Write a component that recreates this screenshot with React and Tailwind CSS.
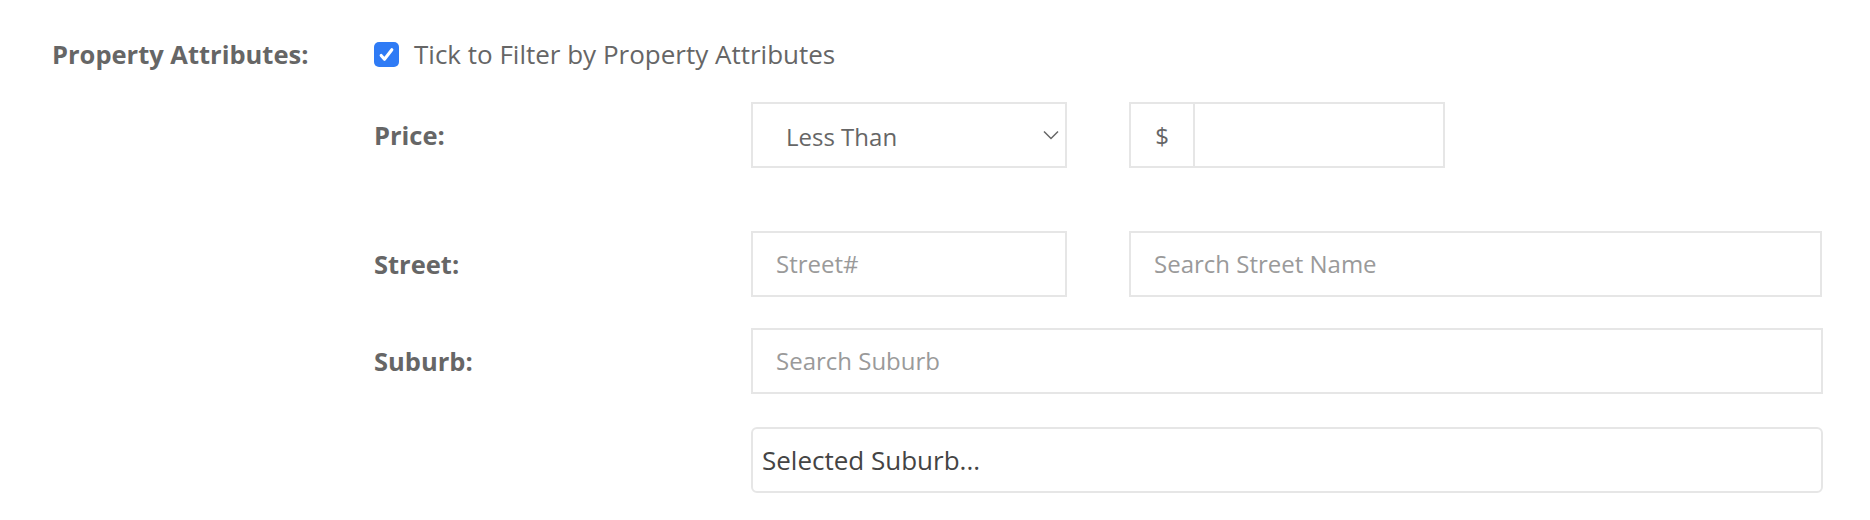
export default function App() {
    const box = "h-[66px] flex-none border-2 border-[#e6e6e6] bg-white";

    return (
        <div className="min-h-[520px] bg-white font-['Open_Sans',sans-serif] text-[#666]">
            <div className="flex pl-[52px] pt-[42px]">
                <div className="w-[322px] flex-none text-[25.5px] font-bold leading-[25px]">
                    Property Attributes:
                </div>
                <div className="w-[1449px] flex-none">
                    {/* checkbox row */}
                    <label className="flex items-center gap-[15px] h-[25px]">
                        <span className="w-[25px] h-[25px] flex-none rounded-[5px] bg-[#2f7bf5] flex items-center justify-center">
                            <svg viewBox="0 0 16 16" className="w-[19px] h-[19px]" fill="none">
                                <path d="M3.5 8.8l2.8 3.2 6.2-8" stroke="white" strokeWidth="2.6" strokeLinecap="round" strokeLinejoin="round" />
                            </svg>
                        </span>
                        <span className="text-[26px] leading-[25px]">Tick to Filter by Property Attributes</span>
                    </label>

                    {/* price row */}
                    <div className="flex items-center mt-[35px]">
                        <div className="w-[377px] flex-none text-[25.5px] font-bold">Price:</div>
                        <div className={`${box} w-[316px] flex items-center justify-between pl-[33px] pr-[6px]`}>
                            <span className="text-[24px] pt-[3px]">Less Than</span>
                            <svg viewBox="0 0 16 10" className="w-[16px] h-[10px]" fill="none">
                                <path d="M1 1.5l7 7 7-7" stroke="#666" strokeWidth="1.5" />
                            </svg>
                        </div>
                        <div className={`${box} w-[316px] ml-[62px] flex`}>
                            <div className="w-[64px] border-r-2 border-[#e6e6e6] flex items-center justify-center text-[24px] pt-[2px]">$</div>
                            <div className="flex-1" />
                        </div>
                    </div>

                    {/* street row */}
                    <div className="flex items-center mt-[63px]">
                        <div className="w-[377px] flex-none text-[25.5px] font-bold">Street:</div>
                        <div className={`${box} w-[316px] flex items-center pl-[23px] text-[24px] text-[#9a9a9a]`}>Street#</div>
                        <div className={`${box} w-[693px] ml-[62px] flex items-center pl-[23px] text-[24px] text-[#9a9a9a]`}>Search Street Name</div>
                    </div>

                    {/* suburb row */}
                    <div className="flex items-center mt-[31px]">
                        <div className="w-[377px] flex-none text-[25.5px] font-bold">Suburb:</div>
                        <div className={`${box} w-[1072px] flex items-center pl-[23px] text-[24px] text-[#9a9a9a]`}>Search Suburb</div>
                    </div>

                    <div className="flex mt-[33px]">
                        <div className="w-[377px] flex-none" />
                        <div className={`${box} w-[1072px] rounded-[6px] flex items-center pl-[9px] text-[26px] text-[#444]`}>Selected Suburb...</div>
                    </div>
                </div>
            </div>
        </div>
    );
}
